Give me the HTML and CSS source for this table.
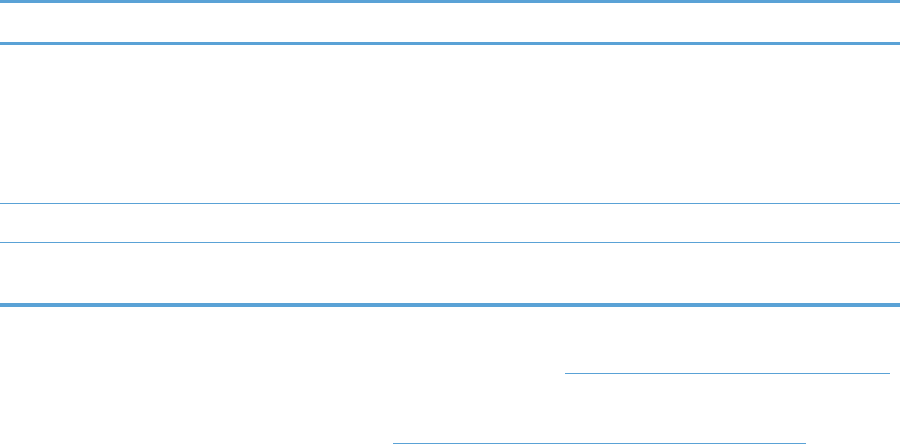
FILE: index.html
```html
<!DOCTYPE html>
<html lang="en">
<head>
    <meta charset="UTF-8">
    <title>Table</title>
    <link rel="stylesheet" href="styles.css">
</head>
<body>
    <div class="spec-table">
        <div class="spec-row spec-head">
            <div class="cell cell-name"></div>
            <div class="cell cell-desc"></div>
        </div>
        <div class="spec-row row-tall">
            <div class="cell cell-name"></div>
            <div class="cell cell-desc"></div>
        </div>
        <div class="spec-row row-short">
            <div class="cell cell-name"></div>
            <div class="cell cell-desc"></div>
        </div>
        <div class="spec-row row-last">
            <div class="cell cell-name"></div>
            <div class="cell cell-desc"></div>
        </div>
    </div>

    <div class="notes">
        <a class="note-link note-first" href="#"></a>
        <a class="note-link note-second" href="#"></a>
    </div>
</body>
</html>
```

FILE: styles.css
```css
:root {
    --rule: #5aa2d6;
}

* {
    margin: 0;
    padding: 0;
    box-sizing: border-box;
}

body {
    background: #ffffff;
    font-family: 'Liberation Sans', Arial, sans-serif;
}

.spec-table {
    width: 900px;
}

.spec-row {
    display: grid;
    grid-template-columns: 211px 1fr;
    border-bottom: 1px solid var(--rule);
}

.spec-head {
    height: 45px;
    border-top: 3px solid var(--rule);
    border-bottom: 3px solid var(--rule);
}

.row-tall {
    height: 159px;
}

.row-short {
    height: 39px;
}

.row-last {
    height: 64px;
    border-bottom: 4px solid var(--rule);
}

.notes {
    display: flex;
    flex-direction: column;
}

.note-link {
    display: block;
    height: 1px;
    background: var(--rule);
}

.note-first {
    margin: 66px 0 0 565px;
    width: 325px;
}

.note-second {
    margin: 69px 0 0 393px;
    width: 413px;
}
```
